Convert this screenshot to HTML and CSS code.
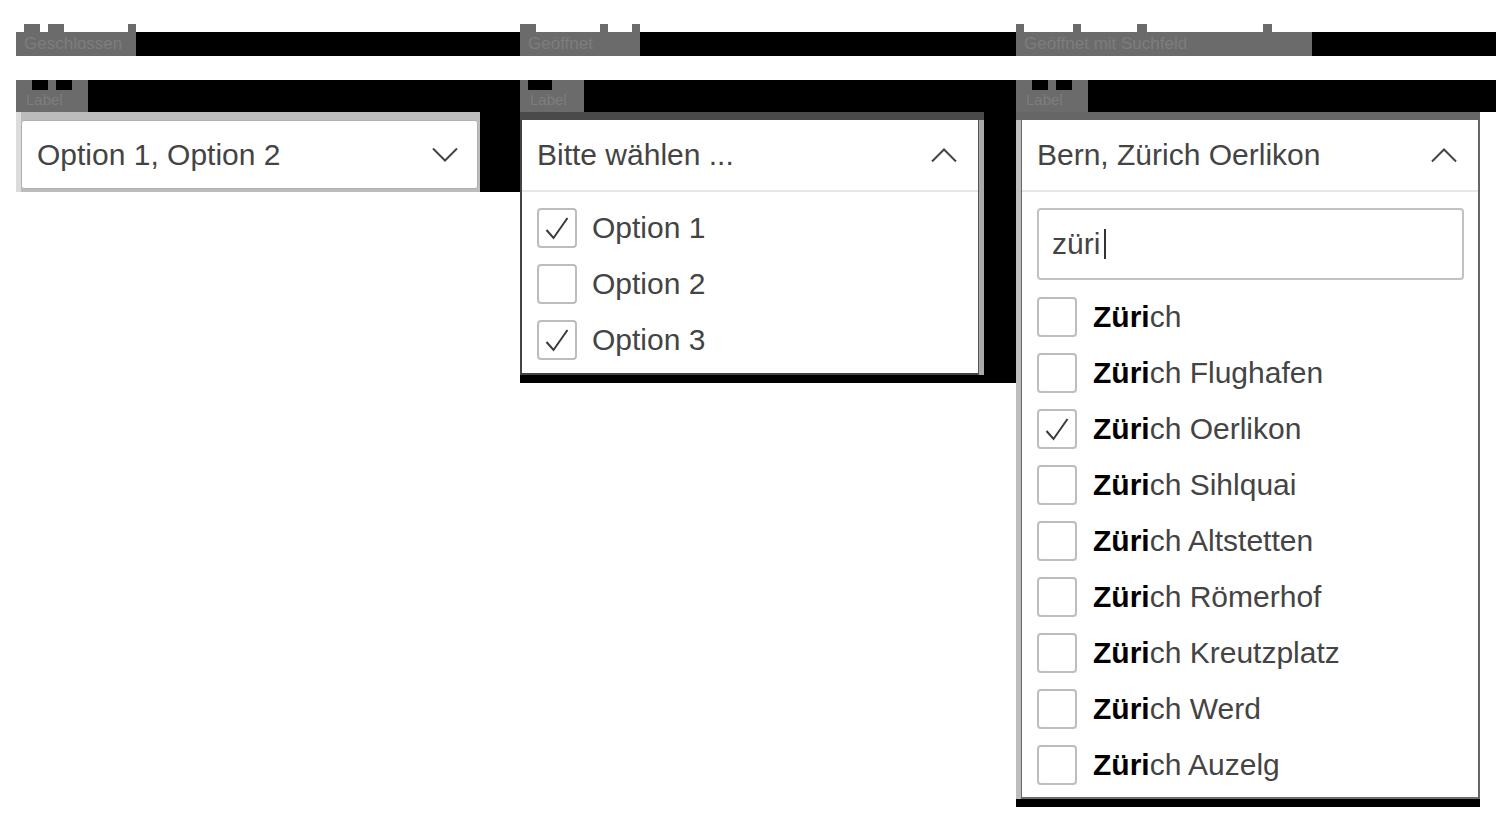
FILE: index.html
```html
<!DOCTYPE html>
<html lang="de">
<head>
<meta charset="utf-8">
<title>Multiselect</title>
<link rel="stylesheet" href="styles.css">
</head>
<body>
<div class="page">
  <div class="row titles">
    <div class="col"><span class="tag title t1">Geschlossen</span></div>
    <div class="col"><span class="tag title t2">Geöffnet</span></div>
    <div class="col"><span class="tag title t3">Geöffnet mit Suchfeld</span></div>
  </div>

  <div class="row labels">
    <div class="col"><span class="tag label n1">Label</span></div>
    <div class="col"><span class="tag label n2">Label</span></div>
    <div class="col"><span class="tag label n1">Label</span></div>
  </div>

  <div class="row fields">
    <div class="cell">
      <div class="closed">
        <div class="control">
          <div class="head head-closed">
            <span>Option 1, Option 2</span>
            <svg class="chev" width="26" height="15" viewBox="0 0 26 15"><polyline points="1,1.5 13,13.5 25,1.5"/></svg>
          </div>
        </div>
      </div>
    </div>

    <div class="cell cell-open">
      <div class="open">
        <div class="panel">
          <div class="head">
            <span>Bitte wählen ...</span>
            <svg class="chev" width="26" height="15" viewBox="0 0 26 15"><polyline points="1,13.5 13,1.5 25,13.5"/></svg>
          </div>
          <div class="opts">
            <div class="opt"><span class="box"><svg class="tick" width="36" height="36" viewBox="2 2 36 36"><polyline points="9.5,22 16.5,30 30.5,10"/></svg></span><span>Option 1</span></div>
            <div class="opt"><span class="box"></span><span>Option 2</span></div>
            <div class="opt"><span class="box"><svg class="tick" width="36" height="36" viewBox="2 2 36 36"><polyline points="9.5,22 16.5,30 30.5,10"/></svg></span><span>Option 3</span></div>
          </div>
        </div>
      </div>
    </div>

    <div class="cell cell-search">
      <div class="search">
        <div class="panel">
          <div class="head">
            <span>Bern, Zürich Oerlikon</span>
            <svg class="chev" width="26" height="15" viewBox="0 0 26 15"><polyline points="1,13.5 13,1.5 25,13.5"/></svg>
          </div>
          <div class="searchbox"><span>züri</span><span class="caret"></span></div>
          <div class="opts opts-search">
            <div class="opt"><span class="box"></span><span><b>Züri</b>ch</span></div>
            <div class="opt"><span class="box"></span><span><b>Züri</b>ch Flughafen</span></div>
            <div class="opt"><span class="box"><svg class="tick" width="36" height="36" viewBox="2 2 36 36"><polyline points="9.5,22 16.5,30 30.5,10"/></svg></span><span><b>Züri</b>ch Oerlikon</span></div>
            <div class="opt"><span class="box"></span><span><b>Züri</b>ch Sihlquai</span></div>
            <div class="opt"><span class="box"></span><span><b>Züri</b>ch Altstetten</span></div>
            <div class="opt"><span class="box"></span><span><b>Züri</b>ch Römerhof</span></div>
            <div class="opt"><span class="box"></span><span><b>Züri</b>ch Kreutzplatz</span></div>
            <div class="opt"><span class="box"></span><span><b>Züri</b>ch Werd</span></div>
            <div class="opt"><span class="box"></span><span><b>Züri</b>ch Auzelg</span></div>
          </div>
        </div>
      </div>
    </div>
  </div>
</div>
</body>
</html>
```
FILE: styles.css
```css
:root {
  --g: linear-gradient(#6b6b6b, #6b6b6b);
  --k: linear-gradient(#000, #000);
}

html, body {
  margin: 0;
  background: #fff;
}

body {
  font-family: "Liberation Sans", Arial, sans-serif;
  color: #444;
}

.page {
  padding: 24px 4px 0 16px;
}

.row {
  display: grid;
  grid-template-columns: 504px 496px 480px;
}

/* title row */
.titles {
  height: 32px;
  background: linear-gradient(to bottom, transparent 8px, #000 8px);
}

.tag {
  display: block;
  box-sizing: border-box;
  height: 32px;
  overflow: hidden;
  white-space: nowrap;
  color: #7d7d7d;
}

.title {
  padding: 8px 0 0 8px;
  font-size: 17px;
  line-height: 24px;
  background-repeat: no-repeat;
}

.t1 {
  width: 120px;
  background-image: var(--g), var(--g), var(--g), var(--g);
  background-position: 0 8px, 8px 0, 32px 0, 112px 0;
  background-size: 100% 24px, 16px 8px, 16px 8px, 8px 8px;
}

.t2 {
  width: 120px;
  background-image: var(--g), var(--g), var(--g), var(--g);
  background-position: 0 8px, 0 0, 80px 0, 112px 0;
  background-size: 100% 24px, 16px 8px, 8px 8px, 8px 8px;
}

.t3 {
  width: 296px;
  background-image: var(--g), var(--g), var(--g), var(--g), var(--g);
  background-position: 0 8px, 0 0, 57px 0, 121px 0, 247px 0;
  background-size: 100% 24px, 8px 8px, 8px 8px, 10px 8px, 9px 8px;
}

/* label row */
.labels {
  margin-top: 24px;
  height: 32px;
  background: #000;
}

.label {
  padding: 10px 0 0 10px;
  font-size: 15px;
  line-height: 20px;
  background-repeat: no-repeat;
  background-color: #6b6b6b;
}

.n1 {
  width: 72px;
  background-image: var(--k), var(--k);
  background-position: 16px 0, 40px 0;
  background-size: 16px 10px, 16px 10px;
}

.n2 {
  width: 64px;
  background-image: var(--k);
  background-position: 8px 0;
  background-size: 24px 10px;
}

/* dropdown row */
.fields {
  align-items: start;
}

.cell {
  background: #000;
}

.cell-open,
.cell-search {
  padding-bottom: 8px;
}

.cell-search {
  width: 464px;
}

.head {
  display: flex;
  align-items: center;
  justify-content: space-between;
  height: 70px;
  padding: 0 21px 0 15px;
  border-bottom: 2px solid #e6e6e6;
  font-size: 30px;
  color: #444;
}

.chev {
  display: block;
  fill: none;
  stroke: #444;
  stroke-width: 2;
}

/* closed select */
.closed {
  width: 464px;
  box-sizing: border-box;
  background: #bcbcbc;
  padding: 8px 2px 3px 5px;
  box-shadow: inset 5px 0 0 #dcdcdc;
}

.control {
  background: #fff;
  border: 1px solid #b0b0b0;
  border-radius: 3px;
}

.head-closed {
  height: 67px;
  border-bottom: 0;
  padding: 0 19px 0 15px;
}

/* open select */
.open {
  width: 464px;
  box-sizing: border-box;
  background: #a9a9a9;
  border-top: 8px solid #4a4a4a;
  padding-right: 5px;
}

.panel {
  background: #fff;
}

.open .panel {
  border-left: 2px solid #444;
  border-right: 1px solid #555;
  border-bottom: 2px solid #444;
}

.opts {
  display: flex;
  flex-direction: column;
  gap: 16px;
  padding: 16px 15px 13px;
}

.opt {
  display: flex;
  align-items: center;
  gap: 15px;
  height: 40px;
  font-size: 30px;
  color: #444;
}

.opt b {
  color: #000;
  font-weight: 700;
}

.box {
  flex: none;
  display: block;
  box-sizing: border-box;
  width: 40px;
  height: 40px;
  border: 2px solid #bdbdbd;
  border-radius: 4px;
}

.tick {
  display: block;
  fill: none;
  stroke: #3a3a3a;
  stroke-width: 2;
}

/* search select */
.search {
  width: 464px;
  box-sizing: border-box;
  background: #bdbdbd;
  border-top: 8px solid #666;
  padding-left: 5px;
}

.search .panel {
  border-left: 1px solid #666;
  border-right: 2px solid #666;
  border-bottom: 2px solid #6e6e6e;
}

.searchbox {
  display: flex;
  align-items: center;
  height: 72px;
  box-sizing: border-box;
  margin: 16px 14px 0 15px;
  padding-left: 13px;
  border: 2px solid #c2c2c2;
  border-radius: 4px;
  font-size: 30px;
  color: #444;
}

.caret {
  width: 2px;
  height: 30px;
  margin-left: 4px;
  background: #333;
}

.opts-search {
  padding: 17px 15px 12px;
}

.opts-search .opt {
  gap: 16px;
}
```
